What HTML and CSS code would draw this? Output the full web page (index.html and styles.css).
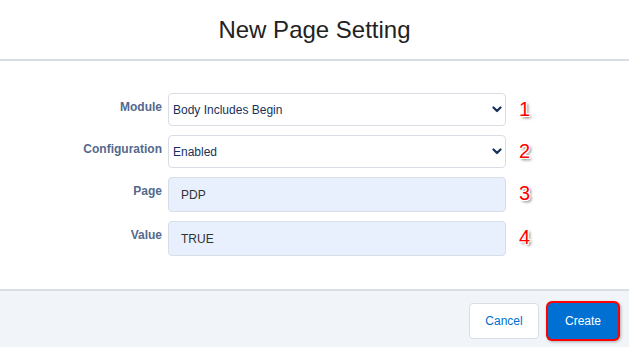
FILE: index.html
```html
<!DOCTYPE html>
<html lang="en">

<head>
    <meta charset="UTF-8">
    <title>New Page Setting</title>
    <link rel="stylesheet" href="styles.css">
</head>

<body>
    <div id="modal">
        <div id="modal-head">
            <h2>New Page Setting</h2>
        </div>
        <div id="modal-body">
            <div class="form">
                <label class="label">Module</label>
                <div class="select">
                    <span>Body Includes Begin</span>
                    <svg width="10" height="7" viewBox="0 0 10 7"><polyline points="1.5,1.5 5,5 8.5,1.5" fill="none" stroke="#16325c" stroke-width="2.2" stroke-linecap="round" stroke-linejoin="round"/></svg>
                </div>
                <span class="mark">1</span>

                <label class="label">Configuration</label>
                <div class="select">
                    <span>Enabled</span>
                    <svg width="10" height="7" viewBox="0 0 10 7"><polyline points="1.5,1.5 5,5 8.5,1.5" fill="none" stroke="#16325c" stroke-width="2.2" stroke-linecap="round" stroke-linejoin="round"/></svg>
                </div>
                <span class="mark">2</span>

                <label class="label">Page</label>
                <div class="input">PDP</div>
                <span class="mark">3</span>

                <label class="label">Value</label>
                <div class="input">TRUE</div>
                <span class="mark">4</span>
            </div>
        </div>
        <div id="modal-footer">
            <button class="btn btn-neutral">Cancel</button>
            <button class="btn btn-brand">Create</button>
        </div>
    </div>
</body>

</html>
```

FILE: styles.css
```css
* {
    margin: 0;
    padding: 0;
    box-sizing: border-box;
}

html,
body {
    height: 100%;
}

body {
    font-family: "Liberation Sans", Arial, sans-serif;
    background: #fff;
}

#modal {
    width: 100%;
    height: 100%;
    display: flex;
    flex-direction: column;
}

#modal-head {
    height: 61px;
    border-bottom: 2px solid #d8dde6;
    display: flex;
    justify-content: center;
    align-items: center;
}

#modal-head h2 {
    font-size: 24px;
    font-weight: normal;
    color: #222;
    margin-top: 1px;
}

#modal-body {
    height: 230px;
    border-bottom: 2px solid #d8dde6;
    padding-top: 32px;
}

.form {
    display: grid;
    grid-template-columns: 162px 338px auto;
    column-gap: 6px;
    row-gap: 9px;
}

.label {
    text-align: right;
    font-size: 12px;
    font-weight: bold;
    color: #54698d;
    line-height: 16px;
    padding-top: 6px;
}

.select {
    height: 33px;
    border: 1px solid #d8dde6;
    border-radius: 4px;
    background: #fff;
    display: flex;
    justify-content: space-between;
    align-items: center;
    padding: 0 3px 0 4px;
    font-size: 12px;
    color: #16325c;
}

.input {
    height: 35px;
    border: 1px solid #d8dde6;
    border-radius: 4px;
    background: #e8f0fe;
    display: flex;
    align-items: center;
    padding-left: 12px;
    font-size: 12px;
    color: #333;
}

.mark {
    margin-left: 7px;
    font-size: 20px;
    line-height: 20px;
    color: #f00;
    padding-top: 6px;
    text-shadow: -1px 0 #fff, 1px 0 #fff, 0 1px #fff, 0 -1px #fff, 1px 1px #fff, -1px -1px #fff,
        1px -1px #fff, -1px 1px #fff, 2px 2px 3px rgba(0, 0, 0, .6);
}

#modal-footer {
    flex-grow: 1;
    background: #f1f4f8;
    display: flex;
    justify-content: flex-end;
    align-items: flex-start;
    gap: 9px;
    padding: 12px 11px 0 0;
}

.btn {
    width: 70px;
    height: 36px;
    border-radius: 4px;
    font-family: "Liberation Sans", Arial, sans-serif;
    font-size: 12px;
    cursor: pointer;
}

.btn-neutral {
    background: #fff;
    border: 1px solid #d8dde6;
    color: #0070d2;
}

.btn-brand {
    background: #0070d2;
    border: 1px solid #0070d2;
    color: #fff;
    box-shadow: 0 0 0 2px #f00, 1px 1px 3px 2px rgba(0, 0, 0, .3);
}
```
